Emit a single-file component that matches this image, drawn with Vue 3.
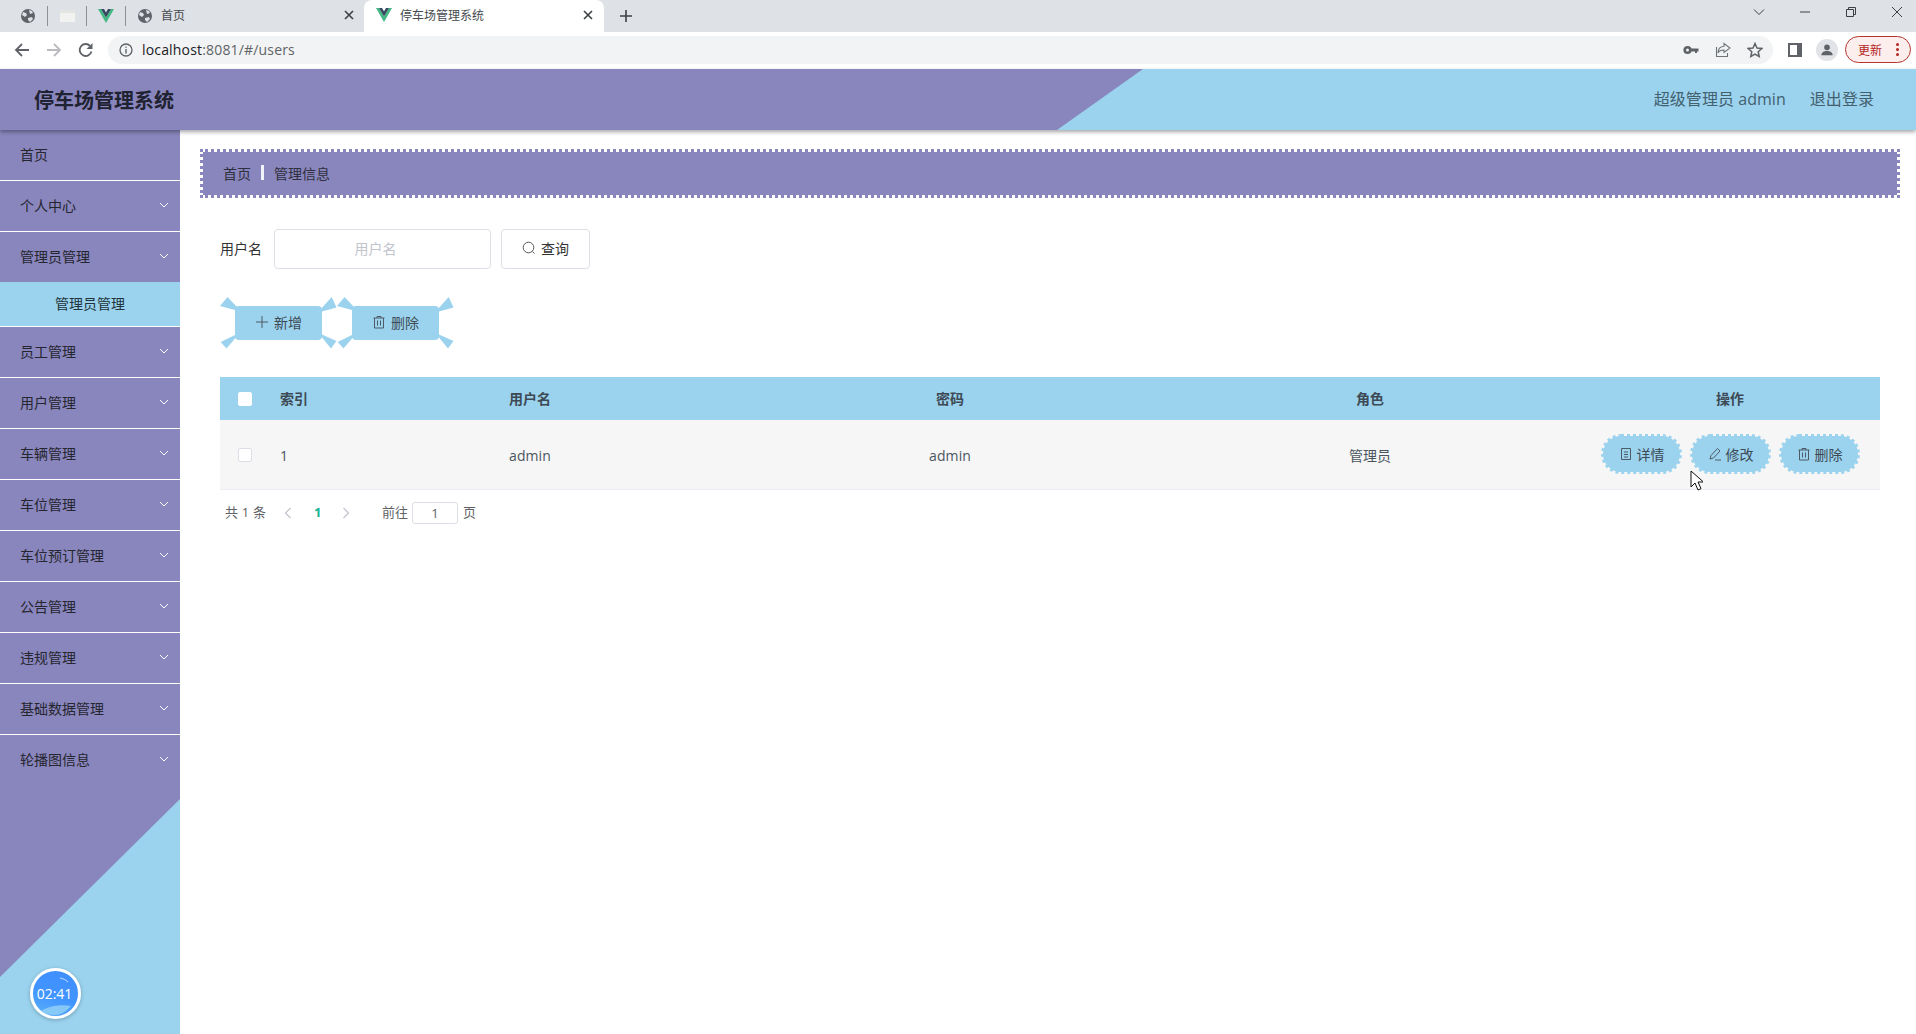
<script setup>
const menu = [
  { label: '首页' },
  { label: '个人中心', arrow: true },
  { label: '管理员管理', arrow: true, open: true, child: '管理员管理' },
  { label: '员工管理', arrow: true },
  { label: '用户管理', arrow: true },
  { label: '车辆管理', arrow: true },
  { label: '车位管理', arrow: true },
  { label: '车位预订管理', arrow: true },
  { label: '公告管理', arrow: true },
  { label: '违规管理', arrow: true },
  { label: '基础数据管理', arrow: true },
  { label: '轮播图信息', arrow: true, last: true }
]
const wedgeList = [
  '0,9 7.5,0 18,11 15,13',
  '100,13 111.7,0 116.5,10.5 102,14.5',
  '0.7,45 15,38 18,38 6.5,51.5',
  '100,38 102,37.5 116.5,44 111,51.5'
]
</script>

<template>
  <div class="page">
    <div class="tabstrip">
      <svg class="fav globe g1" viewBox="0 0 16 16"><circle cx="8" cy="8" r="7" fill="#5f6368"/><path d="M3 4l3 1 1 2-2 2-3-2zM9 2l3 1 1 2-3 1zM8 10l4-1 1 2-3 3-2-2z" fill="#dee1e6"/></svg>
      <i class="sep s1"></i>
      <span class="fav tableicon"></span>
      <i class="sep s2"></i>
      <svg class="fav vue v1" viewBox="0 0 16 14"><path d="M0 0H3L8 8.5 13 0H16L8 14Z" fill="#42b883"/><path d="M3 0H6L8 3.5 10 0H13L8 8.5Z" fill="#35495e"/></svg>
      <i class="sep s3"></i>
      <svg class="fav globe g2" viewBox="0 0 16 16"><circle cx="8" cy="8" r="7" fill="#5f6368"/><path d="M3 4l3 1 1 2-2 2-3-2zM9 2l3 1 1 2-3 1zM8 10l4-1 1 2-3 3-2-2z" fill="#dee1e6"/></svg>
      <span class="tabtitle t1">首页</span>
      <svg class="tabx x1" viewBox="0 0 10 10"><path d="M1 1l8 8M9 1l-8 8" stroke="#3c4043" stroke-width="1.6"/></svg>
      <div class="activetab">
        <svg class="vue" viewBox="0 0 16 14"><path d="M0 0H3L8 8.5 13 0H16L8 14Z" fill="#42b883"/><path d="M3 0H6L8 3.5 10 0H13L8 8.5Z" fill="#35495e"/></svg>
        <span class="activetitle">停车场管理系统</span>
        <svg class="tabx x2" viewBox="0 0 10 10"><path d="M1 1l8 8M9 1l-8 8" stroke="#3c4043" stroke-width="1.6"/></svg>
      </div>
      <svg class="plus" viewBox="0 0 12 12"><path d="M6 0v12M0 6h12" stroke="#3c4043" stroke-width="1.6"/></svg>
      <svg class="win w1" viewBox="0 0 12 12"><path d="M1 3.5l5 5 5-5" fill="none" stroke="#3c4043"/></svg>
      <svg class="win w2" viewBox="0 0 12 12"><path d="M1 6h10" stroke="#3c4043"/></svg>
      <svg class="win w3" viewBox="0 0 12 12"><path d="M1.5 3.5h7v7h-7zM3.5 3.5v-2h7v7h-2" fill="none" stroke="#3c4043"/></svg>
      <svg class="win w4" viewBox="0 0 12 12"><path d="M1 1l10 10M11 1L1 11" stroke="#3c4043"/></svg>
    </div>

    <div class="toolbar">
      <svg class="nav n1" viewBox="0 0 16 16"><path d="M15 8H2M8 2L2 8l6 6" fill="none" stroke="#5f6368" stroke-width="1.8"/></svg>
      <svg class="nav n2" viewBox="0 0 16 16"><path d="M1 8h13M8 2l6 6-6 6" fill="none" stroke="#b9bbbe" stroke-width="1.8"/></svg>
      <svg class="nav n3" viewBox="0 0 16 16"><path d="M13.5 9.5A6 6 0 1 1 12 3.8" fill="none" stroke="#5f6368" stroke-width="1.8"/><path d="M14.5 1v6h-6z" fill="#5f6368"/></svg>
      <div class="omni">
        <svg class="info" viewBox="0 0 14 14"><circle cx="7" cy="7" r="6" fill="none" stroke="#5f6368" stroke-width="1.3"/><path d="M7 6v4.500M7 3.500v1.300" stroke="#5f6368" stroke-width="1.4"/></svg>
        <span class="url"><span class="host">localhost</span>:8081/#/users</span>
        <svg class="oi o1" viewBox="0 0 16 16"><circle cx="4.500" cy="8" r="2.800" fill="none" stroke="#5f6368" stroke-width="2.600"/><path d="M7 6.500h8.500v3h-1.500v1.500h-2V9.500H7z" fill="#5f6368"/></svg>
        <svg class="oi o2" viewBox="0 0 16 16"><path d="M9 1.500l6 4.500-6 4.500V8C6 8 4 9 3 11c0-4 2-6.500 6-6.800zM1.500 5v9.500h11V11" fill="none" stroke="#6f7377" stroke-width="1.100"/></svg>
        <svg class="oi o3" viewBox="0 0 16 16"><path d="M8 1.500l2 4.500 4.800.5-3.600 3.200 1 4.800L8 12l-4.200 2.500 1-4.800L1.200 6.500 6 6z" fill="none" stroke="#5f6368" stroke-width="1.500"/></svg>
      </div>
      <span class="panel"><i></i></span>
      <span class="avatar"><svg viewBox="0 0 16 16"><circle cx="8" cy="5" r="3.200" fill="#5f6368"/><path d="M1.500 14c0-3.500 3-5 6.500-5s6.500 1.500 6.500 5z" fill="#5f6368"/></svg></span>
      <span class="update"><span class="uptext">更新</span><span class="dots"><i></i><i></i><i></i></span></span>
    </div>

    <header class="appheader">
      <h1 class="apptitle">停车场管理系统</h1>
      <div class="headright">
        <span>超级管理员 admin</span>
        <span>退出登录</span>
      </div>
    </header>

    <div class="body">
      <aside class="side">
        <template v-for="m in menu" :key="m.label">
          <div class="mitem" :class="{ open: m.open, last: m.last }">
            <span>{{ m.label }}</span>
            <svg v-if="m.arrow" class="chev" viewBox="0 0 10 6"><path d="M1 1l4 4 4-4" fill="none" stroke="#fff" stroke-width="1"/></svg>
          </div>
          <div v-if="m.child" class="subitem">{{ m.child }}</div>
        </template>
        <div class="clock">
          <svg class="gloss" viewBox="0 0 45 45">
            <path d="M8 40c8-5 20-7 30-5-5 6-11 9-16 9-5 0-10-1-14-4z" fill="#9ad6f5" opacity=".75"/>
            <path d="M27 7c3 .5 6 2 8 4" fill="none" stroke="#fff" stroke-width="1" opacity=".7"/>
          </svg>
          <span class="clocktext">02:41</span>
        </div>
      </aside>

      <main class="main">
        <div class="crumb">
          <span>首页</span><i class="crumbsep"></i><span>管理信息</span>
        </div>

        <div class="searchrow">
          <label class="slabel">用户名</label>
          <input class="sinput" placeholder="用户名" />
          <button class="sbtn">
            <svg class="ic" viewBox="0 0 14 14"><circle cx="6.500" cy="6.500" r="5.300" fill="none" stroke="#555" stroke-width="1"/><path d="M10.500 10.500l2 2" stroke="#555"/></svg>
            查询
          </button>
        </div>

        <div class="actions">
          <button class="wbtn">
            <svg class="wedge" viewBox="0 0 117 52"><polygon v-for="p in wedgeList" :key="p" :points="p" fill="#9bd3ee"/></svg>
            <svg class="ic" viewBox="0 0 14 14"><path d="M7 1v12M1 7h12" stroke="#4d5b66" stroke-width="1"/></svg>
            新增
          </button>
          <button class="wbtn">
            <svg class="wedge" viewBox="0 0 117 52"><polygon v-for="p in wedgeList" :key="p" :points="p" fill="#9bd3ee"/></svg>
            <svg class="ic" viewBox="0 0 14 14"><path d="M1.500 3h11M5 3V1.500h4V3M2.500 3v10h9V3M5.500 5.500v5M8.500 5.500v5" fill="none" stroke="#4d5b66" stroke-width="1"/></svg>
            删除
          </button>
        </div>

        <div class="table">
          <div class="row head">
            <div class="c0"><span class="check white"></span></div>
            <div class="c1">索引</div>
            <div class="c2">用户名</div>
            <div class="c3">密码</div>
            <div class="c4">角色</div>
            <div class="c5">操作</div>
          </div>
          <div class="row data">
            <div class="c0"><span class="check"></span></div>
            <div class="c1 latin">1</div>
            <div class="c2 latin">admin</div>
            <div class="c3 latin">admin</div>
            <div class="c4">管理员</div>
            <div class="c5 ops">
              <button class="dbtn">
                <svg class="ic" viewBox="0 0 14 14"><path d="M2.500 1.500h9v11h-9zM5 5h4M5 7.500h4M5 10h4" fill="none" stroke="#4d5b66" stroke-width="1"/></svg>
                详情
              </button>
              <button class="dbtn">
                <svg class="ic" viewBox="0 0 14 14"><path d="M2 12l1-3.500L9.500 1.500l2.500 2.500-6.500 7zM7 13h6" fill="none" stroke="#4d5b66" stroke-width="1"/></svg>
                修改
              </button>
              <button class="dbtn">
                <svg class="ic" viewBox="0 0 14 14"><path d="M1.500 3h11M5 3V1.500h4V3M2.500 3v10h9V3M5.500 5.500v5M8.500 5.500v5" fill="none" stroke="#4d5b66" stroke-width="1"/></svg>
                删除
              </button>
            </div>
          </div>
        </div>

        <div class="pager">
          <span class="total">共 1 条</span>
          <svg class="pg pl" viewBox="0 0 8 12"><path d="M6.500 1L1.500 6l5 5" fill="none" stroke="#c0c4cc" stroke-width="1.200"/></svg>
          <span class="cur">1</span>
          <svg class="pg pr" viewBox="0 0 8 12"><path d="M1.500 1l5 5-5 5" fill="none" stroke="#c0c4cc" stroke-width="1.200"/></svg>
          <span class="goto">前往</span>
          <span class="pinput">1</span>
          <span class="pageword">页</span>
        </div>
      </main>
    </div>

    <svg class="cursor" viewBox="0 0 13 21"><path d="M1 1v16l4-4 3 7 3-1.300-3-6.700h5.500z" fill="#fff" stroke="#111" stroke-width="1"/></svg>
  </div>
</template>

<style scoped>
.page {
  position: relative;
  width: 1916px;
  height: 1034px;
  overflow: hidden;
  display: flex;
  flex-direction: column;
  background: #fff;
  font-family: "Open Sans", "Noto Sans CJK SC", sans-serif;
  font-size: 14px;
  color: #3d4a55;
}
.tabstrip { position: relative; height: 32px; background: #dee1e6; flex: none; }
.fav { position: absolute; top: 8px; width: 16px; height: 16px; }
.g1 { left: 20px; }
.g2 { left: 137px; }
.v1 { left: 98px; height: 14px; top: 9px; }
.tableicon { left: 60px; top: 10px; width: 15px; height: 12px; background: #f2f3f0; border-top: 3px solid #e3e5e0; box-sizing: border-box; }
.sep { position: absolute; top: 6px; width: 1px; height: 20px; background: #8e9297; }
.s1 { left: 47px; }
.s2 { left: 86px; }
.s3 { left: 125px; }
.tabtitle { position: absolute; left: 161px; top: 7px; font-size: 12px; line-height: 17px; color: #45494e; }
.tabx { position: absolute; width: 10px; height: 10px; }
.x1 { left: 344px; top: 10px; }
.activetab {
  position: absolute; left: 364px; top: 0; width: 240px; height: 32px;
  background: #fff; border-radius: 8px 8px 0 0;
}
.activetab .vue { position: absolute; left: 12px; top: 8px; width: 16px; height: 14px; }
.activetitle { position: absolute; left: 36px; top: 7px; font-size: 12px; line-height: 17px; color: #45494e; }
.x2 { left: 219px; top: 10px; }
.plus { position: absolute; left: 620px; top: 10px; width: 12px; height: 12px; }
.win { position: absolute; top: 6px; width: 12px; height: 12px; }
.w1 { left: 1753px; }
.w2 { left: 1799px; }
.w3 { left: 1845px; }
.w4 { left: 1891px; }

.toolbar { position: relative; height: 37px; background: #fff; flex: none; }
.nav { position: absolute; top: 10px; width: 16px; height: 16px; }
.n1 { left: 14px; }
.n2 { left: 46px; }
.n3 { left: 78px; }
.omni {
  position: absolute; left: 108px; top: 4px; width: 1665px; height: 28px;
  background: #f1f3f4; border-radius: 14px;
}
.info { position: absolute; left: 11px; top: 7px; width: 14px; height: 14px; }
.url { position: absolute; left: 34px; top: 4px; font-size: 14px; line-height: 20px; color: #5f6368; letter-spacing: .17px; }
.host { color: #202124; }
.oi { position: absolute; top: 6px; width: 16px; height: 16px; }
.o1 { left: 1575px; }
.o2 { left: 1607px; }
.o3 { left: 1639px; }
.panel {
  position: absolute; left: 1788px; top: 11px; width: 14px; height: 14px;
  background: #5f6368; box-sizing: border-box; padding: 2px 5px 2px 2px;
}
.panel i { display: block; height: 100%; background: #fff; }
.avatar {
  position: absolute; left: 1816px; top: 7px; width: 22px; height: 22px;
  border-radius: 50%; background: #e1e3e6;
  display: flex; align-items: center; justify-content: center;
}
.avatar svg { width: 14px; height: 14px; }
.update {
  position: absolute; left: 1845px; top: 4px; width: 66px; height: 27px;
  box-sizing: border-box; border: 1px solid #b3332e; border-radius: 14px; background: #fdeeee;
  color: #b3261e; font-size: 12px;
  display: flex; align-items: center;
}
.uptext { margin-left: 12px; }
.dots { margin-left: 14px; display: flex; flex-direction: column; gap: 2px; }
.dots i { width: 3px; height: 3px; border-radius: 50%; background: #b3261e; }

.appheader {
  position: relative; z-index: 2; flex: none; height: 61px;
  background: #9bd3ee;
  box-shadow: 0 2px 4px rgba(0, 0, 0, .35);
  display: flex; align-items: center; justify-content: space-between;
  padding: 0 42px 0 34px;
}
.appheader::before {
  content: ""; position: absolute; left: 0; top: 0; bottom: 0; width: 1143px;
  background: #8985bd;
  clip-path: polygon(0 0, 100% 0, 1057px 100%, 0 100%);
}
.apptitle {
  position: relative; margin: 0; font-size: 20px; font-weight: 700; color: #1f2230;
  font-family: "Noto Sans CJK SC", sans-serif;
}
.headright { position: relative; display: flex; gap: 24px; font-size: 16px; color: #43606f; padding-bottom: 4px; letter-spacing: .05px; }

.body { flex: 1; display: flex; min-height: 0; }
.side {
  position: relative; width: 180px; flex: none; background: #8985bd; overflow: hidden;
}
.side::after {
  content: ""; position: absolute; left: 0; bottom: 0; width: 180px; height: 235px;
  background: #9bd3ee;
  clip-path: polygon(100% 0, 100% 100%, 0 100%, 0 178px);
}
.mitem {
  position: relative; z-index: 1;
  height: 51px; box-sizing: border-box; padding: 0 20px 3px;
  border-bottom: 1px solid #fff;
  display: flex; align-items: center; justify-content: space-between;
  color: #25262f;
}
.mitem.open { height: 50px; border-bottom: 0; padding-bottom: 2px; }
.mitem.last { border-bottom: 0; }
.chev { width: 10px; height: 6px; margin-right: -9px; }
.subitem {
  position: relative; z-index: 1; height: 45px; box-sizing: border-box;
  padding-bottom: 3px;
  background: #9bd3ee; border-bottom: 1px solid #fff;
  display: flex; align-items: center; justify-content: center; color: #23333c;
}
.clock {
  position: absolute; z-index: 1; left: 30px; bottom: 15px;
  width: 51px; height: 51px; box-sizing: border-box; border-radius: 50%;
  border: 3px solid #fff; overflow: hidden;
  background: linear-gradient(200deg, #3f8dff 0%, #4195ff 55%, #5cb0f7 100%);
  box-shadow: 0 1px 4px rgba(0, 0, 0, .25);
  display: flex; align-items: center; justify-content: center;
  color: #fff; font-size: 14px; padding-right: 2px;
}
.gloss { position: absolute; left: 0; top: 0; width: 45px; height: 45px; }
.clocktext { position: relative; }

.main { flex: 1; min-width: 0; padding: 19px 16px 0 20px; }
.crumb {
  height: 49px; box-sizing: border-box;
  border: 3px dotted #8985bd; background: #8985bd; background-clip: padding-box;
  display: flex; align-items: center; padding: 0 0 2px 20px; color: #2f2f3d;
}
.crumbsep { width: 3px; height: 15px; background: #f2f3fa; margin: 0 10px; }
.searchrow { display: flex; align-items: center; margin: 31px 0 0 20px; }
.slabel { width: 54px; flex: none; color: #333; padding-bottom: 2px; }
.sinput {
  width: 217px; height: 40px; box-sizing: border-box;
  border: 1px solid #dcdfe6; border-radius: 4px; outline: none; padding: 0 22px 2px 8px;
  text-align: center; font: inherit; background: #fff;
}
.sinput::placeholder { color: #c0c4cc; opacity: 1; }
.sbtn {
  width: 89px; height: 40px; margin-left: 10px; box-sizing: border-box;
  border: 1px solid #dcdfe6; border-radius: 4px; background: #fff;
  font: inherit; color: #333; padding: 0 0 2px;
  display: flex; align-items: center; justify-content: center; gap: 5px;
}
.ic { width: 14px; height: 14px; flex: none; }
.actions { display: flex; gap: 30px; margin: 37px 0 0 35px; }
.wbtn {
  position: relative; width: 87px; height: 34px; padding: 0 0 2px; border: 0; border-radius: 4px;
  background: #9bd3ee; font: inherit; color: #3d4a55;
  display: flex; align-items: center; justify-content: center; gap: 5px;
}
.wedge { position: absolute; left: -15px; top: -9px; width: 117px; height: 52px; }
.table { margin: 37px 0 0 20px; width: 1660px; }
.row { display: flex; align-items: center; }
.head { height: 43px; background: #9bd3ee; font-weight: 700; color: #3d4a55; font-family: "Noto Sans CJK SC", sans-serif; }
.head > div:not(.c0) { padding-bottom: 2px; }
.data { height: 70px; box-sizing: border-box; background: #f6f6f6; border-bottom: 1px solid #ebeef5; color: #4a5560; }
.latin { padding-top: 1px; letter-spacing: .1px; }
.c0 { width: 50px; display: flex; justify-content: center; }
.c1 { width: 229px; padding-left: 10px; box-sizing: border-box; }
.c2 { width: 241px; padding-left: 10px; box-sizing: border-box; }
.c3 { width: 420px; text-align: center; box-sizing: border-box; }
.c4 { width: 420px; text-align: center; box-sizing: border-box; }
.c5 { width: 300px; text-align: center; box-sizing: border-box; }
.ops { display: flex; justify-content: center; gap: 10px; padding-left: 1px; box-sizing: border-box; }
.check {
  width: 14px; height: 14px; box-sizing: border-box; border-radius: 2px;
  background: #fff; border: 1px solid #dcdfe6; display: block;
}
.check.white { border-color: #fff; }
.dbtn {
  position: relative; z-index: 0;
  width: 81px; height: 40px; box-sizing: border-box; padding: 0 0 1px;
  margin: -1px -1px 0;
  border: 3px dotted #9bd3ee; border-radius: 20px;
  background: transparent;
  font: inherit; font-size: 14px; color: #3d4a55;
  display: flex; align-items: center; justify-content: center; gap: 4px;
}
.dbtn::before {
  content: ""; position: absolute; inset: -1px; z-index: -1;
  background: #9bd3ee; border-radius: 18px;
}
.pager { position: relative; height: 23px; margin: 11px 0 0 20px; font-size: 13px; color: #606266; }
.pager > * { position: absolute; top: 0; line-height: 23px; }
.total { left: 5px; letter-spacing: .2px; }
.pg { width: 8px; height: 12px; top: 6px; }
.pl { left: 64px; }
.pr { left: 122px; }
.cur { left: 94px; color: #17b394; font-weight: 700; }
.goto { left: 162px; }
.pinput {
  left: 192px; top: 1px; width: 46px; height: 22px; box-sizing: border-box; line-height: 20px;
  border: 1px solid #dcdfe6; border-radius: 3px; text-align: center;
}
.pageword { left: 243px; }
.cursor { position: absolute; left: 1690px; top: 470px; width: 13px; height: 21px; z-index: 5; }
</style>
